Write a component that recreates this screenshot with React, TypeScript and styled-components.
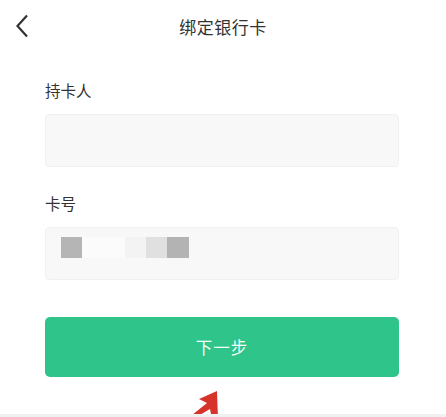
import React from "react";
import styled, { createGlobalStyle } from "styled-components";

const GlobalStyle = createGlobalStyle`
  html, body {
    margin: 0;
    padding: 0;
    background: #fff;
  }
  body {
    font-family: "Noto Sans CJK SC", "Noto Sans", sans-serif;
  }
`;

const Page = styled.div`
  width: 446px;
  height: 417px;
  position: relative;
  overflow: hidden;
  background: #fff;
`;

const Header = styled.div`
  height: 52px;
  display: flex;
  align-items: center;
  justify-content: center;
  position: relative;
`;

const BackButton = styled.div`
  position: absolute;
  left: 14px;
  top: 13px;
  width: 16px;
  height: 26px;
  display: flex;
  align-items: center;
  justify-content: center;
`;

const Title = styled.div`
  font-size: 17px;
  color: #333;
  letter-spacing: 0.5px;
`;

const Form = styled.div`
  padding: 27px 47px 0 45px;
  display: flex;
  flex-direction: column;
`;

const Label = styled.div`
  font-size: 15.5px;
  color: #333;
  line-height: 22px;
  margin-bottom: 13px;
`;

const Field = styled.div<{ $mb: number }>`
  height: 53px;
  background: #f8f8f8;
  border: 1px solid #f1f1f1;
  border-radius: 4px;
  box-sizing: border-box;
  display: flex;
  align-items: center;
  padding: 0 0 12px 15px;
  margin-bottom: ${(p) => p.$mb}px;
`;

const Blur = styled.div<{ $c: string; $w: number }>`
  width: ${(p) => p.$w}px;
  height: 21px;
  background: ${(p) => p.$c};
  filter: blur(0.6px);
`;

const Button = styled.div`
  height: 60px;
  background: #2ec48a;
  border-radius: 5px;
  display: flex;
  align-items: center;
  justify-content: center;
  color: #f4fff9;
  font-size: 16.5px;
  letter-spacing: 1px;
`;

const Arrow = styled.svg`
  position: absolute;
  left: 185px;
  top: 389px;
`;

const BottomStrip = styled.div`
  position: absolute;
  left: 0;
  right: 0;
  bottom: 0;
  height: 3px;
  background: #f0f0f0;
`;

export default function App() {
  return (
    <>
      <GlobalStyle />
      <Page>
        <Header>
          <BackButton>
            <svg width="14" height="24" viewBox="0 0 14 24">
              <path d="M12 1.5 L2.5 12 L12 22.5" fill="none" stroke="#333" strokeWidth="2.2" />
            </svg>
          </BackButton>
          <Title>绑定银行卡</Title>
        </Header>
        <Form>
          <Label>持卡人</Label>
          <Field $mb={25} />
          <Label>卡号</Label>
          <Field $mb={37}>
            <Blur $c="#b5b5b5" $w={21} />
            <Blur $c="#fbfbfb" $w={43} />
            <Blur $c="#f3f3f3" $w={21} />
            <Blur $c="#e0e0e0" $w={21} />
            <Blur $c="#b3b3b3" $w={22} />
          </Field>
          <Button>下一步</Button>
        </Form>
        <Arrow width="50" height="30" viewBox="0 0 50 30">
          <path d="M32 2 L33 30 L27 30 L25 20 L8 30 L2 30 L22 14 L14 10 Z" fill="#d6332b" />
        </Arrow>
        <BottomStrip />
      </Page>
    </>
  );
}
